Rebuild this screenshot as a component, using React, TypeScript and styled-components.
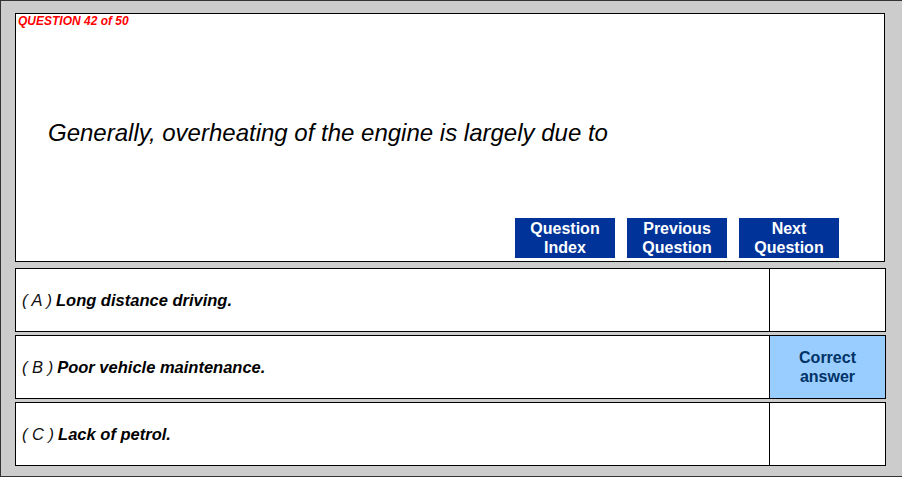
import React from "react";
import styled, { createGlobalStyle } from "styled-components";

const Global = createGlobalStyle`
  html, body { margin: 0; padding: 0; background: #ffffff; overflow: hidden; }
  body { font-family: "Liberation Sans", Arial, sans-serif; }
`;

const Frame = styled.div`
  box-sizing: border-box;
  width: 902px;
  height: 477px;
  background: #cccccc;
  border: 1px solid #333333;
  border-right: none;
  padding: 12px 0 0 14px;
  display: flex;
  flex-direction: column;
`;

const QuestionPanel = styled.div`
  box-sizing: border-box;
  width: 870px;
  height: 249px;
  background: #ffffff;
  border: 1px solid #000000;
  display: flex;
  flex-direction: column;
`;

const Counter = styled.div`
  color: #ff0000;
  font-size: 12px;
  line-height: 14px;
  font-weight: bold;
  font-style: italic;
  padding-left: 2px;
`;

const QuestionText = styled.div`
  margin-top: 91px;
  padding-left: 32px;
  font-size: 24px;
  line-height: 28px;
  font-style: italic;
  color: #000000;
`;

const ButtonRow = styled.div`
  margin-top: auto;
  display: flex;
  justify-content: flex-end;
  gap: 12px;
  padding: 0 45px 3px 0;
`;

const NavButton = styled.div`
  box-sizing: border-box;
  width: 100px;
  height: 40px;
  background: #003399;
  color: #ffffff;
  font-size: 16px;
  font-weight: bold;
  line-height: 19px;
  text-align: center;
  display: flex;
  align-items: center;
  justify-content: center;
`;

const Answers = styled.div`
  margin-top: 6px;
  display: flex;
  flex-direction: column;
  gap: 3px;
`;

const AnswerRow = styled.div`
  box-sizing: border-box;
  width: 871px;
  height: 64px;
  background: #ffffff;
  border: 1px solid #000000;
  display: flex;
`;

const AnswerText = styled.div`
  flex: 1;
  display: flex;
  align-items: center;
  padding-left: 6px;
  font-size: 16.5px;
  font-style: italic;
  color: #000000;
  border-right: 1px solid #000000;
`;

const Letter = styled.span`
  font-weight: normal;
  color: #111111;
  margin-right: 4px;
`;

const Choice = styled.span`
  font-weight: bold;
`;

const Verdict = styled.div<{ $correct?: boolean }>`
  width: 115px;
  background: ${(p) => (p.$correct ? "#99ccff" : "#ffffff")};
  color: #003366;
  font-size: 16px;
  font-weight: bold;
  line-height: 19px;
  text-align: center;
  display: flex;
  align-items: center;
  justify-content: center;
`;

const answers = [
  { letter: "A", text: "Long distance driving.", correct: false },
  { letter: "B", text: "Poor vehicle maintenance.", correct: true },
  { letter: "C", text: "Lack of petrol.", correct: false },
];

export default function App() {
  return (
    <>
      <Global />
      <Frame>
        <QuestionPanel>
          <Counter>QUESTION 42 of 50</Counter>
          <QuestionText>Generally, overheating of the engine is largely due to</QuestionText>
          <ButtonRow>
            <NavButton>Question<br />Index</NavButton>
            <NavButton>Previous<br />Question</NavButton>
            <NavButton>Next<br />Question</NavButton>
          </ButtonRow>
        </QuestionPanel>
        <Answers>
          {answers.map((a) => (
            <AnswerRow key={a.letter}>
              <AnswerText>
                <Letter>( {a.letter} )</Letter>
                <Choice>{a.text}</Choice>
              </AnswerText>
              <Verdict $correct={a.correct}>
                {a.correct ? (
                  <span>Correct<br />answer</span>
                ) : null}
              </Verdict>
            </AnswerRow>
          ))}
        </Answers>
      </Frame>
    </>
  );
}
